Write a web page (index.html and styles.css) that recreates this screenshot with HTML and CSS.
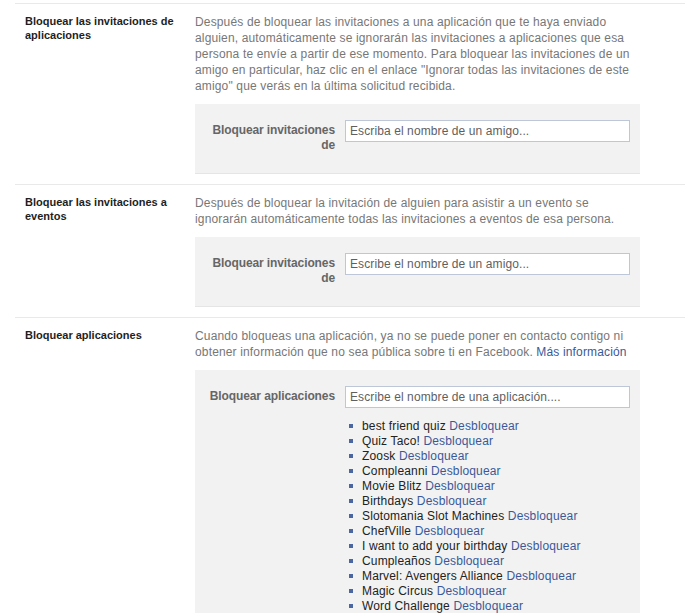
FILE: index.html
```html
<html>
	<head>
		<title>Bloqueos</title>
		<meta charset="utf-8">
		<link rel="stylesheet" href="styles.css">
	</head>

	<body>
		<div class="settings">
			<!-- invitaciones de aplicaciones -->
			<div class="row">
				<div class="row-label">Bloquear las invitaciones de aplicaciones</div>
				<div class="row-content">
					<div class="desc">Después de bloquear las invitaciones a una aplicación que te haya enviado alguien, automáticamente se ignorarán las invitaciones a aplicaciones que esa persona te envíe a partir de ese momento. Para bloquear las invitaciones de un amigo en particular, haz clic en el enlace "Ignorar todas las invitaciones de este amigo" que verás en la última solicitud recibida.</div>
					<div class="box">
						<div class="box-label">Bloquear invitaciones de</div>
						<div class="box-field">
							<input class="text-input" type="text" placeholder="Escriba el nombre de un amigo...">
						</div>
					</div>
				</div>
			</div>

			<!-- invitaciones a eventos -->
			<div class="row">
				<div class="row-label">Bloquear las invitaciones a eventos</div>
				<div class="row-content">
					<div class="desc">Después de bloquear la invitación de alguien para asistir a un evento se ignorarán automáticamente todas las invitaciones a eventos de esa persona.</div>
					<div class="box">
						<div class="box-label">Bloquear invitaciones de</div>
						<div class="box-field">
							<input class="text-input" type="text" placeholder="Escribe el nombre de un amigo...">
						</div>
					</div>
				</div>
			</div>

			<!-- aplicaciones -->
			<div class="row">
				<div class="row-label">Bloquear aplicaciones</div>
				<div class="row-content">
					<div class="desc">Cuando bloqueas una aplicación, ya no se puede poner en contacto contigo ni obtener información que no sea pública sobre ti en Facebook. <a href="#">Más información</a></div>
					<div class="box">
						<div class="box-label">Bloquear aplicaciones</div>
						<div class="box-field">
							<input class="text-input" type="text" placeholder="Escribe el nombre de una aplicación....">
							<ul class="blocked">
								<li>best friend quiz <a href="#">Desbloquear</a></li>
								<li>Quiz Taco! <a href="#">Desbloquear</a></li>
								<li>Zoosk <a href="#">Desbloquear</a></li>
								<li>Compleanni <a href="#">Desbloquear</a></li>
								<li>Movie Blitz <a href="#">Desbloquear</a></li>
								<li>Birthdays <a href="#">Desbloquear</a></li>
								<li>Slotomania Slot Machines <a href="#">Desbloquear</a></li>
								<li>ChefVille <a href="#">Desbloquear</a></li>
								<li>I want to add your birthday <a href="#">Desbloquear</a></li>
								<li>Cumpleaños <a href="#">Desbloquear</a></li>
								<li>Marvel: Avengers Alliance <a href="#">Desbloquear</a></li>
								<li>Magic Circus <a href="#">Desbloquear</a></li>
								<li>Word Challenge <a href="#">Desbloquear</a></li>
							</ul>
						</div>
					</div>
				</div>
			</div>
		</div>
	</body>
</html>
```

FILE: styles.css
```css
body {
	margin: 0;
	padding: 0;
	background: #fff;
	font-family: 'Liberation Sans', Arial, Helvetica, sans-serif;
	font-size: 12px;
	letter-spacing: 0.15px;
	color: #333;
	overflow: hidden;
}

a {
	color: #3b5998;
	text-decoration: none;
}

.settings {
	padding-top: 3px;
	margin-left: 15px;
}

.row {
	display: flex;
	border-top: 1px solid #e9e9e9;
	padding: 10px 0;
}

.row-label {
	width: 180px;
	flex-shrink: 0;
	padding: 0 10px;
	box-sizing: border-box;
	font-size: 11px;
	font-weight: bold;
	letter-spacing: 0;
	line-height: 14px;
	color: #1e1e1e;
}

.row-content {
	width: 445px;
}

.desc {
	color: #777;
	line-height: 16px;
}

.box {
	display: flex;
	margin-top: 10px;
	padding: 16px 10px 20px 10px;
	background: #f2f2f2;
	border-bottom: 1px solid #e5e5e5;
}

.box-label {
	width: 130px;
	flex-shrink: 0;
	padding-top: 3px;
	text-align: right;
	font-weight: bold;
	letter-spacing: -0.1px;
	line-height: 15px;
	color: #666;
}

.box-field {
	padding-left: 10px;
}

.text-input {
	width: 285px;
	height: 22px;
	box-sizing: border-box;
	margin: 0;
	padding: 0 4px;
	border: 1px solid #bdc7d8;
	background: #fff;
	font-family: 'Liberation Sans', Arial, Helvetica, sans-serif;
	font-size: 12px;
	letter-spacing: 0.1px;
	color: #333;
}

.text-input::placeholder {
	color: #5f5f5f;
}

.blocked {
	margin: 11px 0 0 0;
	padding: 0 0 0 17px;
	list-style: none;
	line-height: 15px;
	color: #222;
}

.blocked li::before {
	content: "";
	display: inline-block;
	width: 4px;
	height: 4px;
	margin: 0 9px 0 -13px;
	vertical-align: 2px;
	background: #4b67a1;
}
```
